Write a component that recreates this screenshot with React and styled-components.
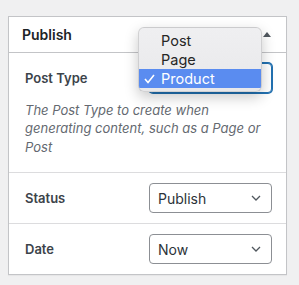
import React from "react";
import styled, { createGlobalStyle } from "styled-components";

const GlobalStyle = createGlobalStyle`
  body {
    margin: 0;
    background: #f0f0f1;
    font-family: Inter, "Noto Sans", sans-serif;
    -webkit-font-smoothing: antialiased;
  }
`;

const Page = styled.div`
  padding: 16px 12px 10px 8px;
`;

const Panel = styled.section`
  position: relative;
  width: 279px;
  box-sizing: border-box;
  background: #fff;
  border: 1px solid #c3c4c7;
  box-shadow: 0 1px 1px rgba(0, 0, 0, 0.04);
`;

const Header = styled.div`
  display: flex;
  align-items: center;
  justify-content: space-between;
  height: 35px;
  padding: 0 13px;
  border-bottom: 1px solid #c3c4c7;
`;

const Title = styled.h2`
  margin: 0;
  font-size: 14px;
  font-weight: 600;
  color: #1d2327;
`;

const Toggle = styled.span`
  width: 0;
  height: 0;
  margin-right: 2px;
  border-left: 4px solid transparent;
  border-right: 4px solid transparent;
  border-bottom: 5px solid #50575e;
`;

const Row = styled.div`
  display: grid;
  grid-template-columns: 1fr 123px;
  align-items: center;
  padding: 10px 14px ${(p) => (p.$tall ? "16px" : "10px")} 16px;
  border-bottom: ${(p) => (p.$last ? "none" : "1px solid #dcdcde")};
`;

const Label = styled.label`
  font-size: 13px;
  font-weight: 600;
  color: #3c434a;
`;

const SelectBox = styled.div`
  display: flex;
  align-items: center;
  justify-content: space-between;
  height: 30px;
  box-sizing: border-box;
  padding: 0 10px 0 8px;
  border: 1px solid ${(p) => (p.$focused ? "#2271b1" : "#8c8f94")};
  border-radius: 4px;
  box-shadow: ${(p) => (p.$focused ? "0 0 0 1px #2271b1" : "none")};
  font-size: 14px;
  color: #2c3338;
  background: #fff;
`;

const Help = styled.p`
  grid-column: 1 / -1;
  margin: 8px 0 0;
  font-size: 13px;
  font-style: italic;
  line-height: 1.42;
  color: #646970;
`;

const Menu = styled.ul`
  position: absolute;
  left: 129px;
  top: 10px;
  width: 124px;
  box-sizing: border-box;
  margin: 0;
  padding: 3px 0;
  list-style: none;
  background: linear-gradient(#efeff1, #e8e8ea);
  border: 1px solid rgba(0, 0, 0, 0.12);
  border-radius: 6px;
  box-shadow: 0 5px 14px rgba(0, 0, 0, 0.22);
  overflow: hidden;
`;

const MenuItem = styled.li`
  position: relative;
  height: 19px;
  line-height: 19px;
  padding-left: 22px;
  font-size: 14.5px;
  color: ${(p) => (p.$active ? "#fff" : "#262626")};
  background: ${(p) => (p.$active ? "#5a8cf0" : "transparent")};
`;

const Check = styled.svg`
  position: absolute;
  left: 5px;
  top: 5px;
`;

const Chevron = () => (
  <svg width="10" height="6" viewBox="0 0 10 6">
    <polyline points="1,1 5,5 9,1" fill="none" stroke="#50575e" strokeWidth="1.3" />
  </svg>
);

const Select = ({ value, focused }) => (
  <SelectBox $focused={focused}>
    <span>{value}</span>
    <Chevron />
  </SelectBox>
);

export default function App() {
  return (
    <>
      <GlobalStyle />
      <Page>
        <Panel>
          <Header>
            <Title>Publish</Title>
            <Toggle />
          </Header>
          <Row $tall>
            <Label>Post Type</Label>
            <Select value="Product" focused />
            <Help>
              The Post Type to create when generating content, such as a Page or Post
            </Help>
          </Row>
          <Row>
            <Label>Status</Label>
            <Select value="Publish" />
          </Row>
          <Row $last>
            <Label>Date</Label>
            <Select value="Now" />
          </Row>
          <Menu>
            <MenuItem>Post</MenuItem>
            <MenuItem>Page</MenuItem>
            <MenuItem $active>
              <Check width="11" height="10" viewBox="0 0 11 10">
                <polyline points="1,5 4,8.5 10,1" fill="none" stroke="#fff" strokeWidth="1.6" />
              </Check>
              Product
            </MenuItem>
          </Menu>
        </Panel>
      </Page>
    </>
  );
}
